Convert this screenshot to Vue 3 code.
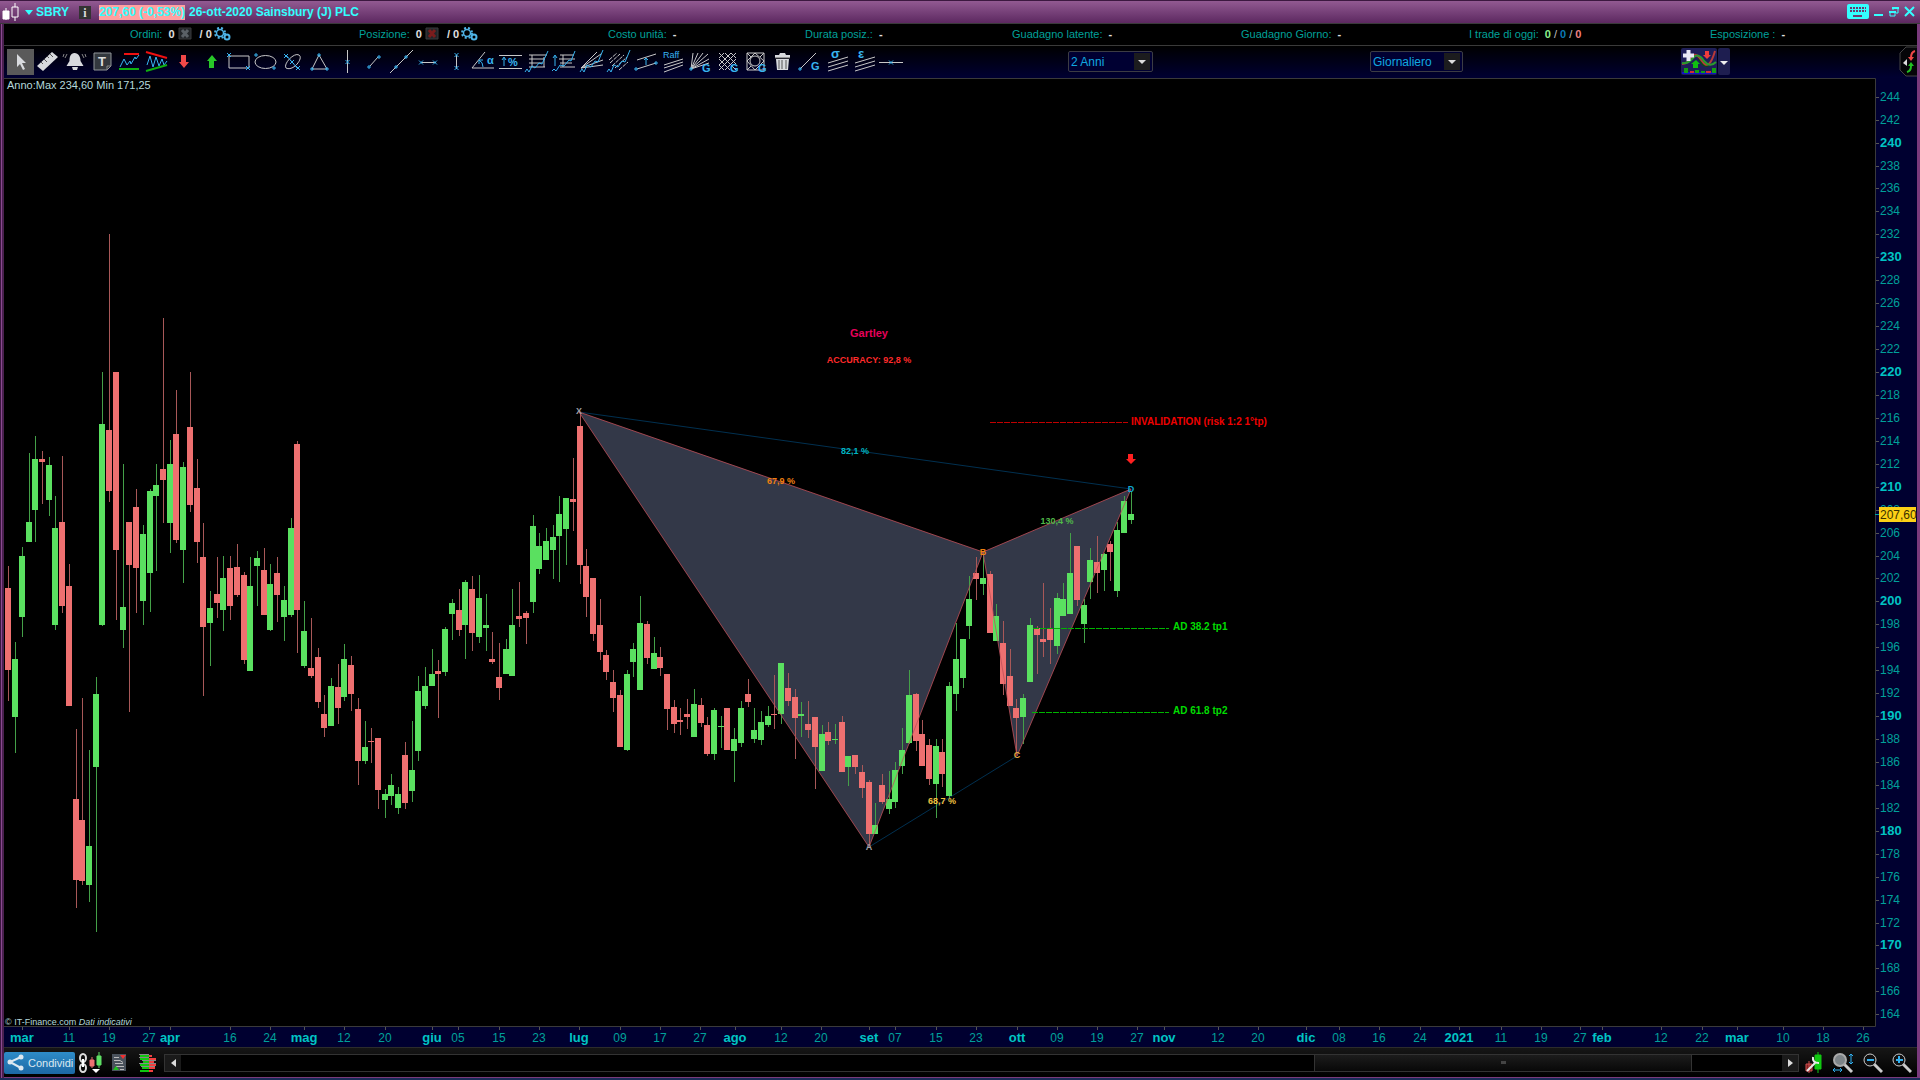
<script setup>
import { ref } from "vue";

const periodo = ref("2 Anni");
const timeframe = ref("Giornaliero");

const info = [
  { label: "Ordini:", valore: "0", annulla: "grigio" },
  { label: "Posizione:", valore: "0", annulla: "rosso" },
  { label: "Costo unità:", valore: "-" },
  { label: "Durata posiz.:", valore: "-" },
  { label: "Guadagno latente:", valore: "-" },
  { label: "Guadagno Giorno:", valore: "-" },
  { label: "I trade di oggi:", trade: true },
  { label: "Esposizione :", valore: "-" },
];

// piccoli marcatori usati nelle icone
const x = (a, b) => `M${a - 2} ${b - 2}l4 4M${a + 2} ${b - 2}l-4 4`;
const p = (a, b) => `M${a - 2} ${b}h4M${a} ${b - 2}v4`;

// d = tracciato, c = classe css
const strumenti = [
  { nome: "Puntatore", attivo: true, forme: [{ d: "M10 5v13l3-3 3 6 2-1-3-6h4z", c: "chiaro" }] },
  {
    nome: "Righello",
    forme: [
      { d: "M18 3l6 5L9 22l-6-5z", c: "chiaro" },
      { d: "M16 5l3 3M13 7l2 2M10 10l3 3M7 13l2 2", c: "scuro" },
    ],
  },
  {
    nome: "Allarme",
    forme: [
      { d: "M13.500 4c-4 0-5 4-5 8l-3 5h17l-3-5c0-4-2-8-6-8zM11 18h6l-1 3h-4z", c: "chiaro" },
      { d: "M6 5l-2 4M3 5l-1 3M21 5l2 4M24 5l1 3", c: "tenue" },
    ],
  },
  {
    nome: "Testo",
    forme: [
      { d: "M5 4h17v13l-4 4H5z", c: "scheda" },
      { d: "M22 17h-4v4", c: "tenue" },
    ],
    testi: [{ t: "T", x: 9, y: 17, c: "grande bianco" }],
  },
  {
    nome: "Supporti e resistenze",
    forme: [
      { d: "M4 18l4-8 3 6 3-4 1 3 4-7 1 2 3-4", c: "blu" },
      { d: "M8 5h15", c: "rosso" },
      { d: "M3 20h20", c: "verde" },
    ],
  },
  {
    nome: "Figure",
    forme: [
      { d: "M4 16l3-9 3 11 3-10 3 9 3-7 2 6 3-4", c: "blu" },
      { d: "M3 3l21 6", c: "rosso" },
      { d: "M3 22l21-6", c: "verde" },
    ],
  },
  { nome: "Freccia giù", forme: [{ d: "M11 6h5v7h3l-5 6-5-6h2z", c: "frosso" }] },
  { nome: "Freccia su", forme: [{ d: "M11 19h5v-7h3l-5-6-5 6h2z", c: "fverde" }] },
  { nome: "Rettangolo", forme: [{ d: "M4 7h20v12H4z", c: "linea" }, { d: x(4, 6) + x(23, 19), c: "blu" }] },
  {
    nome: "Ellisse",
    forme: [
      { d: "M3 13a10.500 6.500 0 1 0 21 0a10.500 6.500 0 1 0-21 0", c: "linea" },
      { d: p(4, 6) + p(22, 19), c: "blu" },
    ],
  },
  {
    nome: "Ellisse inclinata",
    forme: [
      { d: "M7 19c-3-4 8-16 13-13s-6 17-13 13z", c: "linea" },
      { d: "M7 6l12 14" + x(7, 7) + x(19, 19) + x(13, 13), c: "blu" },
    ],
  },
  { nome: "Triangolo", forme: [{ d: "M13 6L6 20h15z", c: "linea" }, { d: p(13, 6) + p(6, 20) + p(21, 20), c: "blu" }] },
  { nome: "Linea verticale", forme: [{ d: "M13.500 1v23", c: "linea" }, { d: x(13.5, 13), c: "blu" }] },
  { nome: "Segmento", forme: [{ d: "M9 17l8-9", c: "linea" }, { d: p(8, 18) + p(18, 8), c: "blu" }] },
  { nome: "Retta", forme: [{ d: "M2 24L25 1", c: "linea" }, { d: p(8, 18) + p(18, 8), c: "blu" }] },
  { nome: "Segmento orizzontale", forme: [{ d: "M6 13.500h15", c: "linea" }, { d: x(6, 13.5) + x(20, 13.5), c: "blu" }] },
  { nome: "Segmento verticale", forme: [{ d: "M13.500 6v14", c: "linea" }, { d: x(13.5, 6) + x(13.5, 19), c: "blu" }] },
  {
    nome: "Angolo",
    forme: [
      { d: "M15 3L2 19h22", c: "linea" },
      { d: "M9 11q4 2 4 7M9 15v-4h4", c: "blu" },
    ],
    testi: [{ t: "α", x: 17, y: 15, c: "medio" }],
  },
  {
    nome: "Variazione percentuale",
    forme: [
      { d: "M2 6.500h23M2 19.500h23", c: "linea" },
      { d: "M7 17V9M5 11l2-3 2 3", c: "blu" },
    ],
    testi: [{ t: "%", x: 11, y: 17, c: "medio" }],
  },
  {
    nome: "Ritracciamenti",
    forme: [
      { d: "M5 6h18M5 10h16M5 14h13M5 18h16M8 6v12M20 8v10", c: "linea" },
      { d: "M1 23l2-3 2 3 3-6 3 2 4-5 3 1 6-13", c: "blu" },
    ],
  },
  {
    nome: "Estensioni",
    forme: [
      { d: "M9 6h14M8 10h16M9 14h12M9 18h15M12 6v12", c: "linea" },
      { d: "M1 22l2-2 2 2 4-6 4 1 5-6 2 1 4-10M4 7v10M2 9l2-3 2 3", c: "blu" },
    ],
  },
  {
    nome: "Ventaglio",
    forme: [
      { d: "M2 19L18 3M2 19L22 5M2 19l22-8M2 19l22-3", c: "linea" },
      { d: "M1 23l2-3 2 3 3-7 4 2 4-6 3 1 5-12", c: "blu" },
    ],
  },
  {
    nome: "Fasce",
    forme: [
      { d: "M4 14L14 5M6 17L18 6M9 19L21 8M13 21l9-8M3 11l8-7", c: "tratteggio" },
      { d: "M1 23l2-3 2 3 3-7 4 2 4-6 3 1 5-12", c: "blu" },
    ],
  },
  {
    nome: "Canale",
    forme: [
      { d: "M4 11l19-6M4 20l19-6", c: "linea" },
      { d: "M13 16V9M11 11l2-2 2 2" + p(3, 20) + p(23, 14), c: "blu" },
    ],
  },
  {
    nome: "Canale Raff",
    forme: [{ d: "M4 16l19-6M4 19l19-6M4 23l19-7", c: "linea" }],
    testi: [{ t: "Raff", x: 3, y: 9, c: "piccolo" }],
  },
  {
    nome: "Ventaglio di Gann",
    forme: [
      { d: "M4 20L6 4M4 20L11 4M4 20L16 4M4 20L21 5M4 20l18-10M4 20l18-6", c: "linea" },
      { d: p(4, 20), c: "blu" },
    ],
    testi: [{ t: "G", x: 15, y: 23, c: "medio" }],
  },
  {
    nome: "Griglia di Gann",
    forme: [{ d: "M4 9l5-5M4 16L16 4M4 21L21 4M10 21L21 10M4 4l17 17M10 4l11 11M16 4l5 5M4 10l11 11M4 16l5 5", c: "linea" }],
    testi: [{ t: "G", x: 15, y: 23, c: "medio" }],
  },
  {
    nome: "Quadrato di Gann",
    forme: [
      { d: "M5 4h17v17H5zM5 4l4 4M22 4l-4 4M5 21l4-4M13 4l9 8-9 9-8-9z", c: "linea" },
      { d: "M8 12a5 5 0 1 0 10 0a5 5 0 1 0-10 0", c: "linea" },
    ],
    testi: [{ t: "G", x: 16, y: 23, c: "medio" }],
  },
  {
    nome: "Cestino",
    forme: [
      { d: "M6 6h4l1-2h5l1 2h4v3H6zM7 10h13l-1 11H8z", c: "chiaro" },
      { d: "M10 11v9M13 11v9M17 11v9M6 9h15", c: "scuro" },
    ],
  },
  {
    nome: "Linea di Gann",
    forme: [{ d: "M4 20L20 4", c: "linea" }, { d: p(4, 20), c: "blu" }],
    testi: [{ t: "G", x: 15, y: 21, c: "medio" }],
  },
  {
    nome: "Deviazione standard",
    forme: [{ d: "M4 14l20-6M4 18l20-6M4 22l20-6", c: "linea" }],
    testi: [{ t: "σ", x: 7, y: 9, c: "grande" }],
  },
  {
    nome: "Errore standard",
    forme: [{ d: "M4 14l20-6M4 18l20-6M4 22l20-6", c: "linea" }],
    testi: [{ t: "ε", x: 7, y: 9, c: "grande" }],
  },
  { nome: "Linea orizzontale", forme: [{ d: "M1 13.500h24", c: "linea" }, { d: x(13, 13.5), c: "blu" }] },
];

// massimo, inizio corpo, fine corpo, minimo, colore (v = verde, r = rosso)
const candele = [
  [566, 588, 670, 701, "r"], [642, 659, 717, 753, "v"], [547, 556, 617, 637, "v"], [453, 522, 542, 542, "v"],
  [436, 459, 510, 542, "v"], [451, 459, 462, 504, "r"], [457, 465, 500, 516, "v"], [496, 528, 625, 630, "v"],
  [456, 522, 606, 613, "r"], [564, 586, 706, 706, "r"], [729, 799, 880, 908, "r"], [698, 820, 881, 885, "r"],
  [750, 846, 885, 902, "v"], [677, 694, 767, 932, "v"], [372, 424, 625, 626, "v"], [234, 430, 491, 502, "r"],
  [372, 372, 550, 620, "r"], [464, 607, 630, 648, "v"], [522, 522, 565, 712, "r"], [489, 507, 568, 613, "r"],
  [525, 534, 601, 625, "v"], [489, 491, 573, 612, "v"], [464, 485, 496, 571, "v"], [318, 469, 480, 523, "r"],
  [440, 464, 523, 553, "v"], [390, 434, 540, 543, "r"], [462, 467, 550, 583, "v"], [372, 427, 505, 512, "r"],
  [459, 488, 542, 563, "r"], [523, 557, 627, 696, "r"], [591, 608, 623, 666, "v"], [557, 594, 603, 618, "r"],
  [556, 578, 610, 631, "v"], [556, 568, 606, 620, "r"], [544, 567, 595, 597, "r"], [572, 575, 660, 664, "r"],
  [557, 586, 671, 671, "v"], [551, 558, 566, 606, "v"], [548, 570, 615, 615, "r"], [564, 584, 630, 631, "v"],
  [557, 573, 595, 622, "r"], [586, 600, 617, 641, "v"], [518, 528, 615, 617, "v"], [441, 444, 610, 653, "r"],
  [601, 631, 666, 668, "v"], [618, 668, 676, 678, "r"], [648, 657, 702, 708, "r"], [695, 714, 728, 737, "r"],
  [678, 686, 726, 726, "v"], [664, 687, 708, 724, "r"], [644, 659, 697, 701, "v"], [656, 665, 694, 711, "r"],
  [698, 709, 761, 785, "r"], [721, 747, 761, 764, "v"], [728, 741, 742, 763, "r"], [738, 738, 790, 809, "r"],
  [789, 794, 800, 818, "v"], [774, 785, 796, 805, "v"], [787, 794, 808, 814, "v"], [742, 755, 803, 809, "r"],
  [721, 770, 791, 802, "v"], [676, 691, 751, 761, "v"], [667, 686, 706, 709, "v"], [649, 674, 686, 686, "v"],
  [660, 671, 674, 718, "r"], [627, 629, 672, 676, "v"], [599, 603, 614, 640, "v"], [589, 610, 630, 636, "r"],
  [580, 582, 625, 659, "v"], [576, 589, 633, 651, "r"], [575, 598, 637, 643, "v"], [594, 625, 628, 651, "v"],
  [632, 659, 662, 664, "r"], [643, 677, 688, 700, "r"], [639, 649, 674, 674, "v"], [589, 625, 676, 676, "v"],
  [582, 616, 619, 627, "r"], [611, 613, 618, 644, "r"], [515, 526, 602, 613, "v"], [533, 546, 569, 574, "v"],
  [528, 541, 560, 560, "v"], [525, 537, 550, 579, "v"], [496, 514, 536, 582, "v"], [498, 498, 529, 565, "v"],
  [458, 499, 502, 531, "r"], [412, 426, 565, 584, "r"], [549, 566, 597, 617, "r"], [578, 578, 634, 641, "r"],
  [599, 625, 652, 660, "r"], [650, 655, 672, 680, "r"], [670, 682, 698, 712, "r"], [690, 695, 747, 747, "r"],
  [670, 674, 750, 751, "v"], [643, 649, 662, 677, "v"], [596, 623, 690, 690, "v"], [621, 624, 658, 664, "r"],
  [637, 653, 669, 669, "v"], [647, 657, 668, 676, "r"], [674, 674, 709, 730, "r"], [700, 707, 724, 733, "r"],
  [708, 720, 722, 735, "r"], [699, 714, 717, 729, "r"], [689, 704, 737, 737, "v"], [698, 705, 723, 727, "r"],
  [717, 725, 754, 756, "r"], [708, 710, 754, 760, "v"], [716, 726, 727, 748, "v"], [708, 708, 750, 750, "r"],
  [728, 739, 751, 782, "v"], [701, 708, 743, 747, "v"], [679, 694, 702, 707, "r"], [708, 730, 739, 743, "v"],
  [711, 722, 740, 745, "v"], [706, 716, 725, 727, "v"], [675, 714, 715, 729, "r"], [663, 663, 714, 724, "v"],
  [673, 688, 701, 706, "r"], [689, 697, 718, 759, "r"], [702, 714, 716, 737, "v"], [701, 724, 730, 738, "r"],
  [717, 717, 747, 789, "r"], [725, 734, 771, 771, "v"], [722, 732, 741, 745, "r"], [724, 739, 740, 744, "v"],
  [716, 722, 772, 772, "r"], [756, 756, 767, 786, "v"], [755, 755, 767, 774, "r"], [765, 772, 788, 798, "r"],
  [780, 782, 834, 845, "r"], [803, 825, 834, 834, "v"], [774, 785, 802, 804, "r"], [771, 799, 809, 814, "v"],
  [762, 770, 802, 808, "v"], [728, 750, 766, 774, "v"], [670, 695, 743, 744, "v"], [693, 694, 741, 751, "r"],
  [720, 734, 766, 766, "r"], [739, 745, 779, 785, "r"], [739, 746, 784, 818, "v"], [739, 752, 774, 787, "r"],
  [682, 686, 796, 798, "v"], [623, 659, 694, 711, "v"], [639, 639, 678, 688, "v"], [576, 599, 626, 639, "v"],
  [557, 573, 579, 600, "r"], [552, 578, 584, 595, "v"], [571, 574, 633, 633, "r"], [604, 616, 641, 641, "v"],
  [621, 643, 684, 695, "r"], [649, 676, 706, 706, "r"], [699, 708, 718, 752, "r"], [694, 698, 717, 744, "v"],
  [618, 625, 682, 682, "v"], [626, 628, 635, 674, "r"], [583, 639, 642, 657, "r"], [608, 629, 640, 664, "r"],
  [593, 598, 646, 654, "v"], [583, 599, 616, 616, "v"], [533, 573, 614, 614, "v"], [546, 546, 600, 606, "r"],
  [599, 605, 624, 643, "v"], [548, 560, 582, 599, "v"], [536, 562, 573, 593, "r"], [553, 554, 570, 591, "v"],
  [541, 544, 552, 581, "r"], [522, 530, 591, 597, "v"], [496, 501, 533, 533, "v"], [492, 514, 520, 524, "v"],
];
const posX = (i) => Math.round(8.4 + i * 6.72);

const prezzi = [];
for (let v = 244; v >= 164; v -= 2) {
  prezzi.push({ v, y: Math.round(96.7 + (244 - v) * 11.47), forte: v % 10 === 0 });
}

const date = [
  ["mar", 22], ["11", 69], ["19", 109], ["27", 149], ["apr", 170], ["16", 230], ["24", 270], ["mag", 304],
  ["12", 344], ["20", 385], ["giu", 432], ["05", 458], ["15", 499], ["23", 539], ["lug", 579], ["09", 620],
  ["17", 660], ["27", 700], ["ago", 735], ["12", 781], ["20", 821], ["set", 869], ["07", 895], ["15", 936],
  ["23", 976], ["ott", 1017], ["09", 1057], ["19", 1097], ["27", 1137], ["nov", 1164], ["12", 1218], ["20", 1258],
  ["dic", 1306], ["08", 1339], ["16", 1379], ["24", 1420], ["2021", 1459], ["11", 1501], ["19", 1541], ["27", 1580],
  ["feb", 1602], ["12", 1661], ["22", 1702], ["mar", 1737], ["10", 1783], ["18", 1823], ["26", 1863],
];
const mese = (t) => t.length > 2;
</script>

<template>
  <div class="finestra">
    <header class="titolo">
      <svg class="logo" width="18" height="20" viewBox="0 0 18 20">
        <path d="M4 6v12M1 9h6v8H1z" fill="#fff" stroke="#fff" />
        <path d="M13 1v4M13 15v4M10 5h6v10h-6z" fill="none" stroke="#fff" />
      </svg>
      <svg width="8" height="5" viewBox="0 0 8 5"><path d="M0 0h8L4 5z" fill="#3ff" /></svg>
      <strong class="simbolo">SBRY</strong>
      <button class="dettagli" aria-label="Informazioni">i</button>
      <strong class="prezzo">207,60 (-0,53%)</strong>
      <strong>26-ott-2020 Sainsbury (J) PLC</strong>
      <div class="comandi">
        <button aria-label="Tastiera">
          <svg width="22" height="16" viewBox="0 0 22 16">
            <rect width="22" height="15" rx="2" fill="#3ff" />
            <path d="M3 4h16M3 7h16" stroke="#6b3a70" stroke-width="2" stroke-dasharray="2 1" />
            <path d="M6 12h9" stroke="#6b3a70" stroke-width="2" />
          </svg>
        </button>
        <button aria-label="Riduci">
          <svg width="10" height="16" viewBox="0 0 10 16"><path d="M0 11h9" stroke="#3ff" stroke-width="2" /></svg>
        </button>
        <button aria-label="Ripristina">
          <svg width="10" height="16" viewBox="0 0 10 16">
            <path d="M4 6V4h5v5H7M1 8h5v4H1z" fill="none" stroke="#3ff" />
            <path d="M3 4h7M0 8h7" stroke="#3ff" stroke-width="2" />
          </svg>
        </button>
        <button aria-label="Chiudi">
          <svg width="11" height="16" viewBox="0 0 11 16">
            <path d="M1 3l9 9M10 3l-9 9" stroke="#3ff" stroke-width="2" />
          </svg>
        </button>
      </div>
    </header>

    <div class="info">
      <div v-for="voce in info" :key="voce.label" class="voce">
        <span>{{ voce.label }}</span>
        <b v-if="voce.valore">{{ voce.valore }}</b>
        <template v-if="voce.annulla">
          <button class="annulla" :class="voce.annulla" aria-label="Annulla">
            <svg width="14" height="13" viewBox="0 0 14 13">
              <path d="M1 1h12v11H1z" fill="#23262a" stroke="#3a3a3c" />
              <path d="M4 3l6 7M10 3l-6 7" stroke="currentColor" stroke-width="3" />
            </svg>
          </button>
          <b class="secondo">/ 0</b>
          <svg class="ruote" width="17" height="14" viewBox="0 0 17 14">
            <circle cx="6" cy="6" r="5" fill="none" stroke="#4fb4e6" stroke-width="2" stroke-dasharray="2 2" />
            <circle cx="6" cy="6" r="3.5" fill="none" stroke="#4fb4e6" stroke-width="1.5" />
            <circle cx="13" cy="10" r="2.5" fill="none" stroke="#4fb4e6" stroke-width="2" />
          </svg>
        </template>
        <span v-if="voce.trade" class="trade">
          <b class="t-verde">0</b> / <b class="t-blu">0</b> / <b class="t-rosso">0</b>
        </span>
      </div>
    </div>

    <div class="barra">
      <div class="strumenti">
        <button v-for="s in strumenti" :key="s.nome" :class="{ attivo: s.attivo }" :aria-label="s.nome">
          <svg width="27" height="26" viewBox="0 0 27 26">
            <path v-for="(f, i) in s.forme" :key="i" :d="f.d" :class="f.c" />
            <text v-for="t in s.testi" :key="t.t" :x="t.x" :y="t.y" :class="t.c">{{ t.t }}</text>
          </svg>
        </button>
      </div>
      <label class="scelta scelta-periodo">
        <select v-model="periodo" aria-label="Periodo">
          <option>2 Anni</option>
        </select>
        <svg width="16" height="17" viewBox="0 0 16 17">
          <rect width="16" height="17" fill="#1c1c1e" />
          <path d="M4 7h8l-4 4z" fill="#ddd" />
        </svg>
      </label>
      <label class="scelta scelta-tempo">
        <select v-model="timeframe" aria-label="Timeframe">
          <option>Giornaliero</option>
        </select>
        <svg width="16" height="17" viewBox="0 0 16 17">
          <rect width="16" height="17" fill="#1c1c1e" />
          <path d="M4 7h8l-4 4z" fill="#ddd" />
        </svg>
      </label>
      <button class="indicatori" aria-label="Indicatori">
        <svg width="49" height="27" viewBox="0 0 49 27">
          <rect width="36" height="27" rx="2" fill="#1e1e58" />
          <rect x="37" width="12" height="27" rx="2" fill="#1e1e50" />
          <path d="M16 8q6 1 12 10-7 4-12-10z" fill="#0a4a10" />
          <path d="M1 16q7-1 10-7t10 4q7 11 13-10" fill="none" stroke="#b93a3a" stroke-width="2" />
          <path d="M1 15q6 1 11-5t11 3q6 7 12 1" fill="none" stroke="#2a9a2e" stroke-width="2" />
          <path d="M2 7.500h11M7.500 2v11" stroke="#e8e8f4" stroke-width="4" />
          <path d="M24 3h4v4h2l-4 4-4-4h2z" fill="#f03c3c" />
          <path d="M12 20h5v-4h2l-4-4-5 4h2z" fill="#10c010" />
          <path d="M1 25h34" stroke="#1212c8" stroke-width="2" />
          <path d="M3 20h4v5H3zM14 22h4v3h-4zM20 23h4v2h-4zM31 20h4v5h-4z" fill="#12a012" />
          <path d="M9 24h4M25 24h5" stroke="#d03030" stroke-width="2" />
          <path d="M39 13h8l-4 4z" fill="#eee" />
        </svg>
      </button>
      <button class="ordini" aria-label="Pannello ordini">
        <svg width="18" height="31" viewBox="0 0 18 31">
          <path d="M18 1H7L1 7v17l6 6h11" fill="#050508" stroke="#444" />
          <path d="M8 13v7l-4-3z" fill="#ddd" />
          <path d="M16 5q-4 1-4 7" fill="none" stroke="#f04848" stroke-width="2" />
          <path d="M9 11h6l-3 4z" fill="#f04848" />
          <path d="M8 26q4-1 4-6" fill="none" stroke="#22c022" stroke-width="2" />
          <path d="M9 20h6l-3-4z" fill="#22c022" />
        </svg>
      </button>
    </div>

    <svg class="grafico" viewBox="4 78 1913 969">
      <rect x="4" y="78" width="1913" height="969" fill="#000030" />
      <rect x="4" y="78" width="1871" height="949" fill="#000" />
      <path d="M4 78.500H1875.500V1026.500H4" fill="none" stroke="#3a3a3a" />

      <text x="7" y="89" class="anno">Anno:Max 234,60 Min 171,25</text>

      <path d="M579 412L869 847L983 552zM983 552L1017 756L1131 489z" fill="#333848" />
      <path d="M579 412L1131 489M869 847L1017 756" class="guida" />

      <g v-for="(c, i) in candele" :key="i" :class="c[4] === 'v' ? 'rialzo' : 'ribasso'">
        <rect class="ombra" :x="posX(i)" :y="c[0]" width="1" :height="c[3] - c[0]" />
        <rect class="corpo" :x="posX(i) - 3" :y="c[1]" width="6" :height="c[2] - c[1]" />
      </g>

      <path d="M579 412L869 847L983 552zM983 552L1017 756L1131 489z" class="contorno" />

      <g class="note">
        <text x="579" y="414" fill="#a0a0a8">X</text>
        <text x="869" y="850" fill="#a0a0a8">A</text>
        <text x="983" y="555" fill="#f08010">B</text>
        <text x="1017" y="758" fill="#e8a840">C</text>
        <text x="1131" y="492" fill="#10a8d0">D</text>
        <text x="855" y="454" fill="#00b4c0">82,1 %</text>
        <text x="781" y="484" fill="#f08010">67,9 %</text>
        <text x="1057" y="524" fill="#50b848">130,4 %</text>
        <text x="942" y="804" fill="#f0c040">68,7 %</text>
        <text x="869" y="363" fill="#ff2a2a">ACCURACY: 92,8 %</text>
        <text x="869" y="337" fill="#e6005a" class="figura">Gartley</text>
      </g>

      <path d="M990 422.500H1128" stroke="#c00000" stroke-dasharray="6 1" />
      <path d="M1033 628.500H1169M1032 712.500H1169" stroke="#00b400" stroke-dasharray="6 1" />
      <g class="livelli">
        <text x="1131" y="425" fill="#f00000">INVALIDATION (risk 1:2 1°tp)</text>
        <text x="1173" y="630" fill="#00dc00">AD 38.2 tp1</text>
        <text x="1173" y="714" fill="#00dc00">AD 61.8 tp2</text>
      </g>
      <path d="M1128 454h5v5h3l-5 5-5-5h2z" fill="#ff2020" />

      <text x="5" y="1025" class="copy">© IT-Finance.com <tspan font-style="italic">Dati indicativi</tspan></text>

      <g v-for="pr in prezzi" :key="pr.v">
        <rect x="1876" :y="pr.y" width="3" height="1" fill="#555" />
        <text x="1880" :y="pr.y + 4" class="asse" :class="{ forte: pr.forte }">{{ pr.v }}</text>
      </g>
      <rect x="1875" y="514" width="4" height="1" fill="#00a0a0" />
      <rect x="1879" y="507" width="37" height="15" fill="#fcd116" />
      <text x="1880" y="519" class="ultimo">207,60</text>

      <g v-for="(d, i) in date" :key="'d' + i">
        <rect :x="d[1]" y="1027" width="1" height="3" fill="#555" />
        <text :x="d[1]" y="1042" text-anchor="middle" class="asse" :class="{ forte: mese(d[0]) }">{{ d[0] }}</text>
      </g>
    </svg>

    <footer class="piede">
      <button class="condividi">
        <svg width="17" height="17" viewBox="0 0 17 17">
          <path d="M14 3L3 8l11 6" fill="none" stroke="#dce8f0" stroke-width="2" />
          <circle cx="14" cy="3" r="2.5" fill="#dce8f0" />
          <circle cx="3" cy="8" r="2.5" fill="#dce8f0" />
          <circle cx="14" cy="14" r="2.5" fill="#dce8f0" />
        </svg>
        Condividi
      </button>
      <button class="icona" aria-label="Collega grafici">
        <svg width="25" height="22" viewBox="0 0 25 22">
          <ellipse cx="5" cy="6" rx="3" ry="4" fill="none" stroke="#ddd" stroke-width="2" />
          <ellipse cx="5" cy="16" rx="3" ry="4" fill="none" stroke="#ddd" stroke-width="2" />
          <path d="M5 7v8" stroke="#fff" stroke-width="2" />
          <path d="M14 5v11M12 8h4v6h-4z" fill="#ee7272" stroke="#ee7272" />
          <path d="M21 0v16M19 4h4v9h-4z" fill="#5fe065" stroke="#5fe065" />
          <path d="M14 17h8l-4 4z" fill="#fff" />
        </svg>
      </button>
      <button class="icona doc" aria-label="Ordini in corso">
        <svg width="15" height="18" viewBox="0 0 15 18">
          <rect width="14" height="17" fill="#4a525c" />
          <path d="M2 3.500h5M2 6.500h6l3 2M3 9.500h8M4 12.500h8M8 15.500h4" fill="none" stroke="#bbb" />
          <path d="M8 1h6l-3 4z" fill="#f03030" />
          <path d="M1 16l3-4 3 4z" fill="#20c020" />
        </svg>
      </button>
      <button class="icona book" aria-label="Book">
        <svg width="18" height="18" viewBox="0 0 18 18">
          <path d="M1 2h9M1 5h9M4 8h6M1 11h9M3 14h7M1 17h9" stroke="#10c810" stroke-width="2" />
          <path d="M10 2h3M10 5h7M10 8h5M10 11h7M10 14h6M10 17h4" stroke="#f04040" stroke-width="2" />
          <path d="M0 .500h10M0 3.500h10M3 6.500h14M0 9.500h17M2 12.500h14" stroke="#888" />
        </svg>
      </button>
      <div class="scorri">
        <button aria-label="Indietro"><svg width="5" height="8" viewBox="0 0 5 8"><path d="M5 0v8L0 4z" fill="#ddd" /></svg></button>
        <div class="vuoto prima"></div>
        <div class="cursore"><i></i></div>
        <div class="vuoto dopo"></div>
        <button aria-label="Avanti"><svg width="5" height="8" viewBox="0 0 5 8"><path d="M0 0v8l5-4z" fill="#ddd" /></svg></button>
      </div>
      <div class="zoom">
        <button aria-label="Impostazioni grafico">
          <svg width="18" height="22" viewBox="0 0 18 22">
            <path d="M13 0v21M10 3h6v14h-6z" fill="#10c810" stroke="#10c810" />
            <path d="M4 9v12M1 12h6v7H1z" fill="#802020" stroke="#d05050" />
            <path d="M2 19l8-8M8 5q-1 6 6 6" fill="none" stroke="#e8e8e8" stroke-width="2" />
          </svg>
        </button>
        <button aria-label="Adatta">
          <svg width="22" height="22" viewBox="0 0 22 22">
            <path d="M12 12l8 8" stroke="#ccc" stroke-width="3" />
            <circle cx="8" cy="8" r="6" fill="#7d8488" stroke="#aaa" stroke-width="2" />
            <path d="M19 2v10M17 4l2-2 2 2M17 10l2 2 2-2M1 18h9M3 16l-2 2 2 2M8 16l2 2-2 2" fill="none" stroke="#30b0f0" />
          </svg>
        </button>
        <button aria-label="Riduci zoom">
          <svg width="20" height="22" viewBox="0 0 20 22">
            <path d="M11 12l8 8" stroke="#ccc" stroke-width="3" />
            <circle cx="7" cy="8" r="6" fill="#111" stroke="#ccc" />
            <path d="M4 8h7" stroke="#30b0f0" stroke-width="2" />
          </svg>
        </button>
        <button aria-label="Aumenta zoom">
          <svg width="20" height="22" viewBox="0 0 20 22">
            <path d="M11 12l8 8" stroke="#ccc" stroke-width="3" />
            <circle cx="7" cy="8" r="6" fill="#111" stroke="#ccc" />
            <path d="M4 8h7M7 4v7" stroke="#30b0f0" stroke-width="2" />
          </svg>
        </button>
      </div>
    </footer>
  </div>
</template>

<style>
body {
  margin: 0;
  background: #000;
}
</style>

<style scoped>
.finestra {
  box-sizing: border-box;
  display: flex;
  flex-direction: column;
  padding: 0 3px 0 4px;
  border-bottom: 2px solid #1a2c58;
  background: linear-gradient(90deg, #3c1840 1px, #8a4a90 1px, #8a4a90 2px, #4a2050 2px, #4a2050 99%, #7a3a7c 99%);
  font-family: "Liberation Sans", Arial, sans-serif;
  font-size: 11px;
  color: #00a09a;
}
button {
  margin: 0;
  padding: 0;
  border: 0;
  background: none;
  font: inherit;
  color: inherit;
}
svg {
  display: block;
}

.titolo {
  box-sizing: border-box;
  display: flex;
  align-items: center;
  height: 24px;
  margin: 0 -3px 0 -4px;
  padding: 0 5px 0 2px;
  border-top: 1px solid #3c1840;
  border-bottom: 1px solid #3a3a3a;
  background: linear-gradient(#925a92, #5c2860);
  color: #3ff;
  font-size: 12px;
}
.logo {
  margin-right: 5px;
}
.simbolo {
  margin: 0 10px 0 3px;
}
.dettagli {
  width: 12px;
  height: 13px;
  margin-right: 8px;
  background: #333;
  color: #ddd;
  font: bold 12px "Liberation Serif", serif;
}
.prezzo {
  margin-right: 4px;
  background: #ffa0a0;
  line-height: 15px;
}
.comandi {
  display: flex;
  gap: 5px;
  margin-left: auto;
}

.info {
  box-sizing: border-box;
  display: grid;
  grid-template-columns: 229fr 249fr 197fr 207fr 229fr 228fr 241fr 207fr;
  align-items: center;
  height: 22px;
  padding: 0 0 2px 126px;
  border-bottom: 1px solid #3a3a3a;
  background: #000;
}
.voce {
  display: flex;
  align-items: center;
  gap: 6px;
  white-space: nowrap;
}
.voce b {
  color: #e0e0e0;
}
.annulla {
  margin-left: -3px;
}
.grigio {
  color: #5a6066;
}
.rosso {
  color: #7a1c1c;
}
.ruote {
  margin-left: -4px;
}
.secondo {
  margin-left: 2px;
}
.trade {
  color: #c0c0c0;
}
.voce .t-verde {
  color: #8cf08c;
}
.voce .t-blu {
  color: #0a78b4;
}
.voce .t-rosso {
  color: #ee8080;
}

.barra {
  box-sizing: border-box;
  display: grid;
  grid-template-columns: 901fr 163fr 85px 217fr 93px 218fr 49px 169fr 18px;
  align-items: center;
  height: 32px;
  padding-bottom: 2px;
  background: linear-gradient(#000, #000032);
}
.strumenti {
  display: flex;
  justify-content: space-between;
  padding-left: 3px;
}
.strumenti .attivo {
  background: #5a5a5a;
}
.strumenti path {
  fill: none;
}
.strumenti .linea {
  stroke: #c8c8c8;
}
.strumenti .tratteggio {
  stroke: #c8c8c8;
  stroke-dasharray: 4 1;
}
.strumenti .blu {
  stroke: #38b4f0;
}
.strumenti .tenue {
  stroke: #888;
}
.strumenti .scuro {
  stroke: #555;
}
.strumenti .chiaro {
  fill: #d8dade;
}
.strumenti .scheda {
  fill: #33383e;
  stroke: #909498;
}
.strumenti .rosso {
  stroke: #f01010;
  stroke-width: 2;
}
.strumenti .verde {
  stroke: #10b010;
  stroke-width: 2;
}
.strumenti .frosso {
  fill: #f04848;
}
.strumenti .fverde {
  fill: #28c828;
}
.strumenti text {
  fill: #38b4f0;
  font-weight: bold;
}
.strumenti .grande {
  font-size: 13px;
}
.strumenti .bianco {
  fill: #ddd;
}
.strumenti .medio {
  font-size: 11px;
}
.strumenti .piccolo {
  font-size: 9px;
  font-weight: normal;
}

.scelta {
  box-sizing: border-box;
  display: flex;
  align-items: center;
  height: 21px;
  padding-right: 2px;
  border: 1px solid #3c3c44;
  border-radius: 2px;
  background: #000032;
}
.scelta select {
  flex: 1;
  min-width: 0;
  padding: 0 0 0 2px;
  border: 0;
  appearance: none;
  background: none;
  color: #10a8e0;
  font: 12px "Liberation Sans", Arial, sans-serif;
}
.scelta-periodo {
  grid-column: 3;
}
.scelta-tempo {
  grid-column: 5;
}
.indicatori {
  grid-column: 7;
}
.ordini {
  grid-column: 9;
}

.grafico {
  width: 100%;
  height: auto;
}
.anno {
  fill: #b4d8dc;
  font-size: 11px;
}
.guida {
  fill: none;
  stroke: #003050;
}
.contorno {
  fill: none;
  stroke: #c0505a;
  stroke-opacity: 0.8;
}
.rialzo .ombra {
  fill: #44a048;
}
.rialzo .corpo {
  fill: #5ae060;
}
.ribasso .ombra {
  fill: #a85858;
}
.ribasso .corpo {
  fill: #ee7070;
}
.note text {
  font-size: 9px;
  font-weight: bold;
  text-anchor: middle;
}
.note .figura {
  font-size: 11px;
}
.livelli {
  font-size: 10px;
  font-weight: bold;
}
.copy {
  fill: #b4d8dc;
  font-size: 9px;
}
.asse {
  fill: #00a09a;
  font-size: 12px;
}
.forte {
  fill: #00c4c4;
  font-size: 13px;
  font-weight: bold;
}
.ultimo {
  fill: #3a3000;
  font-size: 12px;
}

.piede {
  box-sizing: border-box;
  display: flex;
  align-items: center;
  height: 31px;
  border-top: 1px solid #2c2c2c;
  border-bottom: 1px solid #7a3a7c;
  background: linear-gradient(#161616, #000);
}
.condividi {
  display: flex;
  align-items: center;
  gap: 4px;
  height: 22px;
  padding: 0 2px 0 3px;
  border-radius: 2px;
  background: linear-gradient(#2e8cc8, #1c68a4);
  color: #dce8f0;
}
.icona {
  margin-left: 3px;
}
.doc {
  margin-left: 9px;
}
.book {
  margin-left: 12px;
}
.scorri {
  flex: 1;
  box-sizing: border-box;
  display: flex;
  height: 18px;
  margin-left: 7px;
  border: 1px solid #333;
  background: #000;
}
.scorri button {
  display: flex;
  align-items: center;
  justify-content: center;
  width: 16px;
  background: #1a1a1a;
}
.vuoto.prima {
  flex: 1134;
}
.cursore {
  flex: 376;
  display: flex;
  align-items: center;
  justify-content: center;
  border: 0 solid #333;
  border-width: 0 1px;
  background: linear-gradient(#1c1c1c, #080808);
}
.cursore i {
  width: 5px;
  height: 3px;
  background: #444;
}
.vuoto.dopo {
  flex: 90;
}
.zoom {
  display: flex;
  gap: 9px;
  padding: 0 5px 0 6px;
}
</style>
